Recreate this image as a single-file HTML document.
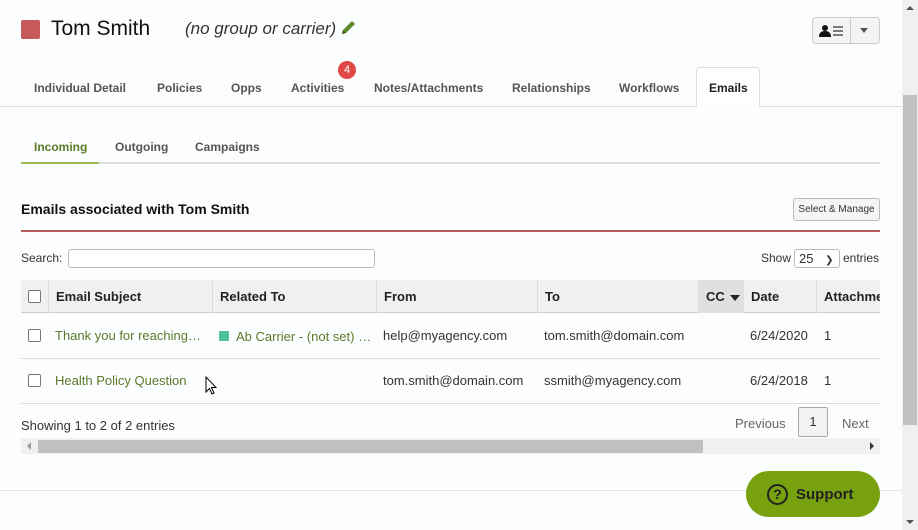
<!DOCTYPE html>
<html><head><meta charset="utf-8"><style>
*{box-sizing:border-box;margin:0;padding:0}
body{width:918px;height:530px;overflow:hidden;background:#fcfdfe;font-family:"Liberation Sans",sans-serif;color:#333;position:relative}
.a{position:absolute;white-space:nowrap}
.tab{position:absolute;top:81px;font-size:12px;color:#555;font-weight:bold}
.th{position:absolute;top:289px;font-size:13px;font-weight:bold;color:#222}
.td{position:absolute;font-size:13px;color:#333}
.g{color:#5a7a2a}
.cb{position:absolute;width:13px;height:13px;border:1px solid #777;border-radius:2px;background:#fff}
.vl{position:absolute;top:281px;width:1px;height:32px;background:#d8d8d8}
</style></head><body>
<div class="a" style="left:21px;top:20px;width:19px;height:19px;background:#c65a5a;border-radius:2px"></div>
<div class="a" style="left:51px;top:17px;font-size:21px;color:#111">Tom Smith</div>
<div class="a" style="left:185px;top:19px;font-size:17px;font-style:italic;color:#333">(no group or carrier)</div>
<svg class="a" style="left:339px;top:18px" width="19" height="19" viewBox="0 0 19 19"><path d="M3 16 L4 12 L13 3 L16 6 L7 15 Z" fill="#5a8a2a"/><path d="M3 16 L4 12 L7 15 Z" fill="#3a5a1a"/></svg>
<div class="a" style="left:812px;top:17px;width:68px;height:27px;border:1px solid #ccc;border-radius:4px;background:#f4f4f4"></div>
<div class="a" style="left:850px;top:18px;width:1px;height:25px;background:#ccc"></div>
<svg class="a" style="left:819px;top:24px" width="26" height="14" viewBox="0 0 26 14"><circle cx="6" cy="4" r="3" fill="#111"/><path d="M0 13 Q0 7 6 7 Q12 7 12 13Z" fill="#111"/><path d="M14 3h10M14 7h10M14 11h10" stroke="#333" stroke-width="1.3"/></svg>
<div class="a" style="left:860px;top:28px;border-left:4px solid transparent;border-right:4px solid transparent;border-top:5px solid #555"></div>
<div class="a" style="left:0;top:106px;width:902px;height:1px;background:#ddd"></div>
<div class="tab" style="left:34px">Individual Detail</div>
<div class="tab" style="left:157px">Policies</div>
<div class="tab" style="left:231px">Opps</div>
<div class="tab" style="left:291px">Activities</div>
<div class="a" style="left:338px;top:61px;width:18px;height:18px;border-radius:50%;background:#e04848;color:#fff;font-size:11px;text-align:center;line-height:18px">4</div>
<div class="tab" style="left:374px">Notes/Attachments</div>
<div class="tab" style="left:512px">Relationships</div>
<div class="tab" style="left:619px">Workflows</div>
<div class="a" style="left:696px;top:67px;width:64px;height:40px;background:#fff;border:1px solid #ddd;border-bottom:none;border-radius:4px 4px 0 0"></div>
<div class="tab" style="left:709px;color:#222">Emails</div>
<div class="a" style="left:21px;top:162px;width:859px;height:2px;background:#ddd"></div>
<div class="a" style="left:21px;top:162px;width:78px;height:2px;background:#9bba5a"></div>
<div class="a" style="left:34px;top:140px;font-size:12px;font-weight:bold;color:#5a7a2a">Incoming</div>
<div class="a" style="left:115px;top:140px;font-size:12px;font-weight:bold;color:#555">Outgoing</div>
<div class="a" style="left:195px;top:140px;font-size:12px;font-weight:bold;color:#555">Campaigns</div>
<div class="a" style="left:21px;top:201px;font-size:14px;font-weight:bold;color:#111">Emails associated with Tom Smith</div>
<div class="a" style="left:793px;top:198px;width:87px;height:23px;border:1px solid #bbb;border-radius:3px;background:#f5f5f5;font-size:10px;text-align:center;line-height:21px;color:#333">Select &amp; Manage</div>
<div class="a" style="left:21px;top:230px;width:859px;height:2px;background:#b06060"></div>
<div class="a" style="left:21px;top:251px;font-size:12px">Search:</div>
<div class="a" style="left:68px;top:249px;width:307px;height:19px;border:1px solid #bbb;border-radius:3px;background:#fff"></div>
<div class="a" style="left:761px;top:251px;font-size:12px">Show</div>
<div class="a" style="left:794px;top:249px;width:46px;height:19px;border:1px solid #bbb;border-radius:3px;background:#fff;font-size:13px;padding-left:4px;line-height:17px">25 <span style="font-size:10px;margin-left:8px">&#10095;</span></div>
<div class="a" style="left:843px;top:251px;font-size:12px">entries</div>
<div class="a" style="left:21px;top:280px;width:859px;height:33px;background:#f0f0f0;border-bottom:1px solid #ccc"></div>
<div class="a" style="left:698px;top:280px;width:46px;height:33px;background:#e0e0e0"></div>
<div class="vl" style="left:48px"></div><div class="vl" style="left:212px"></div><div class="vl" style="left:376px"></div><div class="vl" style="left:537px"></div><div class="vl" style="left:816px"></div>
<div class="cb" style="left:28px;top:290px"></div>
<div class="th" style="left:56px">Email Subject</div>
<div class="th" style="left:220px">Related To</div>
<div class="th" style="left:384px">From</div>
<div class="th" style="left:545px">To</div>
<div class="th" style="left:706px">CC <span style="display:inline-block;border-left:5px solid transparent;border-right:5px solid transparent;border-top:6px solid #222;margin-left:2px"></span></div>
<div class="th" style="left:751px">Date</div>
<div class="th" style="left:824px;width:56px;overflow:hidden">Attachments</div>
<div class="cb" style="left:28px;top:329px"></div>
<div class="td g" style="left:55px;top:328px">Thank you for reaching…</div>
<div class="a" style="left:219px;top:331px;width:10px;height:10px;background:#4cc098;border-radius:1px"></div>
<div class="td g" style="left:236px;top:329px">Ab Carrier - (not set) …</div>
<div class="td" style="left:383px;top:328px">help@myagency.com</div>
<div class="td" style="left:544px;top:328px">tom.smith@domain.com</div>
<div class="td" style="left:750px;top:328px">6/24/2020</div>
<div class="td" style="left:824px;top:328px">1</div>
<div class="a" style="left:21px;top:358px;width:859px;height:1px;background:#ddd"></div>
<div class="cb" style="left:28px;top:374px"></div>
<div class="td g" style="left:55px;top:373px">Health Policy Question</div>
<div class="td" style="left:383px;top:373px">tom.smith@domain.com</div>
<div class="td" style="left:544px;top:373px">ssmith@myagency.com</div>
<div class="td" style="left:750px;top:373px">6/24/2018</div>
<div class="td" style="left:824px;top:373px">1</div>
<svg class="a" style="left:205px;top:376px" width="14" height="20" viewBox="0 0 14 20"><path d="M1 1 L1 16 L4.5 12.5 L7 18 L9 17 L6.5 11.5 L11 11.5 Z" fill="#fff" stroke="#000" stroke-width="1"/></svg>
<div class="a" style="left:21px;top:403px;width:859px;height:1px;background:#ddd"></div>
<div class="a" style="left:21px;top:418px;font-size:13px">Showing 1 to 2 of 2 entries</div>
<div class="a" style="left:735px;top:416px;font-size:13px;color:#666">Previous</div>
<div class="a" style="left:798px;top:407px;width:30px;height:30px;border:1px solid #aaa;border-radius:2px;background:#f2f2f2;font-size:13px;text-align:center;line-height:28px">1</div>
<div class="a" style="left:842px;top:416px;font-size:13px;color:#666">Next</div>
<div class="a" style="left:21px;top:438px;width:859px;height:16px;background:#f0f0f0"></div>
<div class="a" style="left:38px;top:440px;width:665px;height:13px;background:#c0c0c0"></div>
<div class="a" style="left:27px;top:442px;border-top:4px solid transparent;border-bottom:4px solid transparent;border-right:4px solid #999"></div>
<div class="a" style="left:870px;top:442px;border-top:4px solid transparent;border-bottom:4px solid transparent;border-left:4px solid #333"></div>
<div class="a" style="left:0;top:490px;width:902px;height:1px;background:#e4e4e4"></div>
<div class="a" style="left:746px;top:471px;width:134px;height:46px;border-radius:23px;background:#78a10f"></div>
<div class="a" style="left:767px;top:484px;width:21px;height:21px;border:2px solid #222;border-radius:50%;font-size:14px;font-weight:bold;text-align:center;line-height:17px;color:#222">?</div>
<div class="a" style="left:796px;top:486px;font-size:15px;font-weight:bold;color:#222">Support</div>
<div class="a" style="left:902px;top:0;width:16px;height:530px;background:#f0f0f0"></div>
<div class="a" style="left:903px;top:95px;width:14px;height:330px;background:#c1c1c1"></div>
<div class="a" style="left:906px;top:6px;border-left:4px solid transparent;border-right:4px solid transparent;border-bottom:4px solid #555"></div>
<div class="a" style="left:906px;top:520px;border-left:4px solid transparent;border-right:4px solid transparent;border-top:4px solid #555"></div>
</body></html>
